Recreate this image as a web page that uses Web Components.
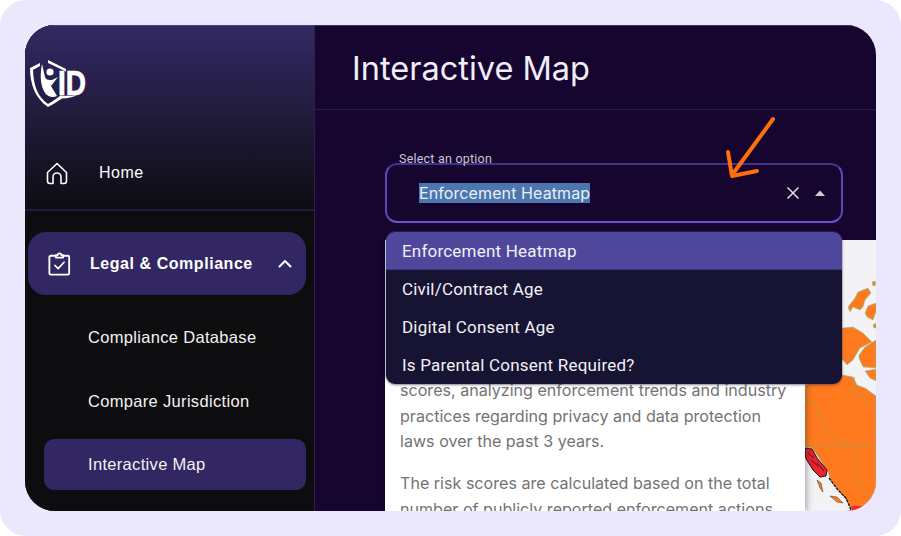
<!DOCTYPE html>
<html>
<head>
<meta charset="utf-8">
<title>Interactive Map</title>
<style>
  html, body { margin: 0; height: 100%; background: #fff; }
  body { font-family: "Liberation Sans", sans-serif; }
</style>
</head>
<body>

<template id="app-frame-tpl">
  <style>
    :host { display: block; width: 901px; height: 536px; box-sizing: border-box; padding: 25px; background: #ebe7fd; border-radius: 26px; }
    #window { display: flex; height: 486px; width: 851px; border-radius: 30px; overflow: hidden; background: #16052e; }
  </style>
  <div id="window"><slot></slot></div>
</template>

<template id="side-bar-tpl">
  <style>
    :host { display: flex; flex-direction: column; width: 290px; flex: none; background: #0d0d0f; border-right: 1px solid #2b2050; box-sizing: border-box; height: 100%; color: #fff; }
    #top { height: 186px; box-sizing: border-box; background: linear-gradient(#332963, #0d0c12); border-bottom: 2px solid #221b3f; border-top: 1px solid #4a4386; }
    #logo { display: block; margin: 34px 0 0 4px; }
    #home { display: flex; align-items: center; margin-top: 51px; padding-left: 20px; font-size: 16px; letter-spacing: .5px; }
    #home svg { margin-right: 30px; }
    #nav { padding: 21px 8px 0 3px; display: flex; flex-direction: column; }
  </style>
  <div id="top">
    <svg id="logo" width="72" height="50" viewBox="0 0 72 50">
      <path d="M11 3 L1 8 C1 24 6 38 19 47 C25 44 29 41 33 38.500 C39 38.500 44 37 48 35 C42 36 36 36 31.500 35.500 C27 39 23 42 19 44 C9 37 4.500 26 4 10 L11 6 Z" fill="#fff"/>
      <path d="M19 0 L37 9 L37 11.500 L19 3 Z" fill="#fff"/>
      <path d="M13 4 C11 14 11 25 16 33 C19 37 24 38 28 36 L22 26 L29 17 L23 20 C20 20 17 20 16 17 C15 13 14 8 13 4 Z" fill="#fff"/>
      <circle cx="21" cy="12" r="3.600" fill="#fff"/>
      <text x="29" y="35" font-family="Liberation Sans, sans-serif" font-weight="700" font-size="35" fill="#fff" stroke="#fff" stroke-width=".7" textLength="28" lengthAdjust="spacingAndGlyphs">ID</text>
    </svg>
    <div id="home">
      <svg width="24" height="24" viewBox="0 0 24 24" fill="none" stroke="#fff" stroke-width="1.600" stroke-linejoin="round" stroke-linecap="round"><path d="M2.500 11.500 L12 2.500 L21.500 11.500 V20 a2.500 2.500 0 0 1 -2.500 2.500 H16 V16 a4 4 0 0 0 -8 0 V22.500 H5 a2.500 2.500 0 0 1 -2.500 -2.500 Z"/></svg>
      <span>Home</span>
    </div>
  </div>
  <div id="nav"><slot></slot></div>
</template>

<template id="nav-group-tpl">
  <style>
    :host { display: flex; align-items: center; height: 63px; border-radius: 18px; background: #332763; color: #fff; font-size: 16px; font-weight: 700; letter-spacing: .55px; padding-left: 20px; box-sizing: border-box; margin-bottom: 17px; }
    span { margin-left: 19px; flex: 1; white-space: nowrap; }
    #chev { margin-right: 14px; }
  </style>
  <svg width="23" height="24" viewBox="0 0 25 26" fill="none" stroke="#fff" stroke-width="2" stroke-linecap="round" stroke-linejoin="round"><path d="M8 4 H3 a1.500 1.500 0 0 0 -1.500 1.500 V23 A1.500 1.500 0 0 0 3 24.500 H21.500 A1.500 1.500 0 0 0 23 23 V5.500 A1.500 1.500 0 0 0 21.500 4 H17"/><path d="M8.500 6 V3.500 H10.500 A2 2 0 0 1 14.500 3.500 H16.500 V6 Z"/><path d="M7.500 14.500 L11 18 L17.500 11" stroke-width="1.700"/></svg>
  <span><slot></slot></span>
  <svg id="chev" width="14" height="9" viewBox="0 0 14 9" fill="none" stroke="#fff" stroke-width="2" stroke-linecap="round" stroke-linejoin="round"><path d="M1.500 7.500 L7 2 L12.500 7.500"/></svg>
</template>

<template id="nav-item-tpl">
  <style>
    :host { display: flex; align-items: center; height: 51px; margin: 0 0 12.500px 16px; padding-left: 44px; border-radius: 10px; color: #f2f2f2; font-size: 16.500px; letter-spacing: .32px; white-space: nowrap; }
    :host([active]) { background: #332763; }
  </style>
  <slot></slot>
</template>

<template id="main-panel-tpl">
  <style>
    :host { display: flex; flex-direction: column; flex: 1; min-width: 0; height: 100%; color: #fff; }
    header { height: 85px; flex: none; box-sizing: border-box; border-top: 1px solid #3a2f66; border-bottom: 1px solid #2c1c4c; padding: 21px 0 0 37px; font: 400 32.500px/44px Inter, sans-serif; color: #f1eefa; }
    #body { flex: 1; min-height: 0; position: relative; }
  </style>
  <header><slot name="title"></slot></header>
  <div id="body"><slot></slot></div>
</template>

<template id="select-field-tpl">
  <style>
    :host { display: block; position: absolute; left: 70px; top: 53px; width: 458px; }
    #box { position: relative; height: 60px; box-sizing: border-box; border: 2px solid; border-color: #43338a #5a46b4 #6a53cc; border-radius: 12px; background: #16052e; display: flex; align-items: center; padding: 0 16px 0 32px; }
    label { position: absolute; left: 10px; top: -14px; padding: 0 2px; height: 14px; color: #c9c5d2; font: 400 12.500px/15px Roboto, sans-serif; letter-spacing: .22px; }
    #value { flex: 1; font: 400 16px/20px Inter, sans-serif; letter-spacing: .1px; color: #e9eff8; }
    #value span { background: #4c77ae; }
    #clear { margin-right: 16px; }
  </style>
  <div id="box">
    <label>Select an option</label>
    <div id="value"><span>Enforcement Heatmap</span></div>
    <svg id="clear" width="12" height="12" viewBox="0 0 12 12" stroke="#dfdde6" stroke-width="1.500" fill="none"><path d="M.500 .500 L11.500 11.500 M11.500 .500 L.500 11.500"/></svg>
    <svg width="10" height="6" viewBox="0 0 10 6"><path d="M0 6 L5 0.500 L10 6 Z" fill="#cfcdd8"/></svg>
  </div>
  <slot></slot>
</template>

<template id="option-list-tpl">
  <style>
    :host { display: block; position: absolute; left: 1px; right: 1px; top: 69px; border-radius: 9px; background: #171333; overflow: hidden; box-shadow: 0 0 0 1px rgba(110,100,170,.25), 0 1px 3px rgba(0,0,0,.4); z-index: 3; }
  </style>
  <slot></slot>
</template>

<template id="option-item-tpl">
  <style>
    :host { display: flex; align-items: center; height: 38px; padding-left: 16px; color: #f1f1f6; font: 400 17px/20px Roboto, sans-serif; letter-spacing: .2px; }
    :host([active]) { background: #4e479c; box-shadow: inset 0 -1px 0 #3b3678; }
  </style>
  <slot></slot>
</template>

<template id="info-map-tpl">
  <style>
    :host { display: flex; position: absolute; left: 70px; right: 0; top: 130px; bottom: 0; background: #f3f3f6; }
    #text { width: 420px; flex: none; box-sizing: border-box; background: #fff; padding: 138px 10px 0 15px; box-shadow: 2px 0 6px rgba(0,0,0,.3); position: relative; z-index: 1; overflow: hidden; color: #737373; font: 400 16.100px/25.500px Inter, sans-serif; }
    svg { flex: none; display: block; }
    ::slotted(p) { margin: 0 0 16.500px; }
  </style>
  <div id="text"><slot></slot></div>
  <svg viewBox="0 0 71 271" width="71" height="271">
    <g fill="#ff7a1f" stroke="#7fcf9f" stroke-width=".6">
      <path d="M43 67 L50 58 L53 52 L63 48 L66 53 L60 60 L58 67 L55 70 L48 67 L45 72 Z"/>
      <path d="M60 73 L63 66 L71 63 V72 L68 80 L62 77 Z"/>
      <path d="M67 42 L70 41 L71 45 L68 46 Z"/>
      <path d="M68 85 L71 83 V88 L69 88 Z"/>
      <path d="M30 90 L38 88 L48 87 L58 93 L67 102 L55 108 L48 120 L42 125 L38 120 L30 120 Z"/>
      <path d="M54 115 L60 107 L71 100 V128 L58 127 L54 118 Z"/>
      <path d="M60 131 L71 129 V141 L65 138 Z"/>
      <path d="M0 145 L38 135 L48 137 L52 145 L60 148 L71 156 V271 H47 L42 261 L34 251 L26 241 L23 232 L14 218 L7 208 L0 207 Z"/>
    </g>
    <path d="M0 160 L10 163 L13 172 L18 180 L25 193 L37 202 L38 206 M0 206 H71 M52 206 V242 L67 258 L71 263 M49 137 V153 L71 167" fill="none" stroke="#ad9a45" stroke-width=".8"/>
    <path d="M0 208 L7 209 L12 218 L22 230 L21 236 L15 237 L8 230 L3 222 L0 217 Z" fill="#e8222e" stroke="#1a1a1a" stroke-width="1"/>
    <path d="M3 213 L9 218 M6 220 L13 226 M12 223 L19 231" stroke="#1a1a1a" stroke-width=".8" fill="none"/>
    <path d="M12 240 L16 243 L18 252 L15 248 Z" fill="#ff7a1f" stroke="#333" stroke-width=".5"/>
    <path d="M25 256 L32 257 L38 263 L32 262 Z" fill="#ff7a1f" stroke="#333" stroke-width=".5"/>
    <path d="M24 238 L33 250 L41 258 L46 270" fill="none" stroke="#111" stroke-width="1.300" stroke-dasharray="3 1"/>
    <path d="M46 266 H71 V271 H48 Z" fill="#ff1f33"/>
  </svg>
</template>

<template id="hint-arrow-tpl">
  <style>
    :host { display: block; position: absolute; left: 405px; top: 5px; z-index: 4; line-height: 0; }
  </style>
  <svg width="60" height="65" viewBox="0 0 60 65" fill="none" stroke="#ff6f10" stroke-width="4" stroke-linecap="round" stroke-linejoin="round"><path d="M53 4 L12 60"/><path d="M8 37 L12 61 L37 56"/></svg>
</template>

<script>
  function simple(tag, tpl) {
    customElements.define(tag, class extends HTMLElement {
      connectedCallback() {
        if (this.shadowRoot) return;
        var root = this.attachShadow({mode: 'open'});
        root.appendChild(document.getElementById(tpl).content.cloneNode(true));
      }
    });
  }
  simple('app-frame', 'app-frame-tpl');
  simple('side-bar', 'side-bar-tpl');
  simple('nav-group', 'nav-group-tpl');
  simple('nav-item', 'nav-item-tpl');
  simple('main-panel', 'main-panel-tpl');
  simple('select-field', 'select-field-tpl');
  simple('option-list', 'option-list-tpl');
  simple('option-item', 'option-item-tpl');
  simple('info-map', 'info-map-tpl');
  simple('hint-arrow', 'hint-arrow-tpl');
</script>

<app-frame>
  <side-bar>
    <nav-group>Legal &amp; Compliance</nav-group>
    <nav-item>Compliance Database</nav-item>
    <nav-item>Compare Jurisdiction</nav-item>
    <nav-item active>Interactive Map</nav-item>
  </side-bar>
  <main-panel>
    <span slot="title">Interactive Map</span>
    <info-map>
      <p>scores, analyzing enforcement trends and industry practices regarding privacy and data protection laws over the past 3 years.</p>
      <p>The risk scores are calculated based on the total number of publicly reported enforcement actions</p>
    </info-map>
    <select-field>
      <option-list>
        <option-item active>Enforcement Heatmap</option-item>
        <option-item>Civil/Contract Age</option-item>
        <option-item>Digital Consent Age</option-item>
        <option-item>Is Parental Consent Required?</option-item>
      </option-list>
    </select-field>
    <hint-arrow></hint-arrow>
  </main-panel>
</app-frame>
</body>
</html>
